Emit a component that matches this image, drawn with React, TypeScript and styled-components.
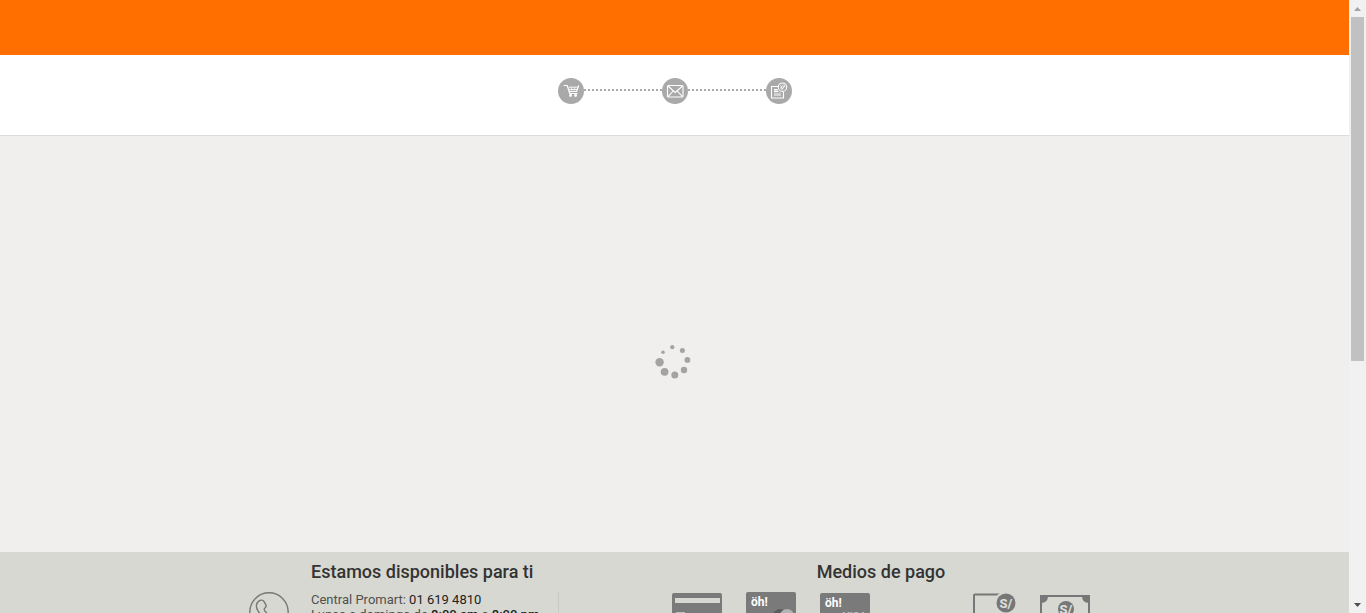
import React from "react";
import styled, { createGlobalStyle } from "styled-components";

const GlobalStyle = createGlobalStyle`
  *, *::before, *::after { box-sizing: border-box; }
  body {
    margin: 0;
    background: #f0efee;
    font-family: Roboto, "Liberation Sans", sans-serif;
    color: #333;
  }
  h2, p { margin: 0; }
`;

const Shell = styled.div`
  display: flex;
  height: 100vh;
  overflow: hidden;
`;

const Page = styled.div`
  flex: 1;
  min-width: 0;
  overflow: hidden;
`;

const Header = styled.header`
  height: 55px;
  background: #ff6f00;
`;

const Progress = styled.nav`
  display: flex;
  justify-content: center;
  padding: 23px 0 31px;
  background: #fff;
  border-bottom: 1px solid #dcdcda;
`;

const Steps = styled.ol`
  display: flex;
  margin: 0;
  padding: 0;
  list-style: none;
`;

const Step = styled.li`
  display: flex;

  & + &::before {
    content: "";
    width: 78px;
    height: 2px;
    margin-top: 11px;
    background: repeating-linear-gradient(90deg, #a9a9a9 0 2px, #fff 2px 4px);
  }
`;

const StepCircle = styled.span`
  display: grid;
  place-items: center;
  width: 26px;
  height: 26px;
  border-radius: 50%;
  background: #a9a9a9;

  svg { display: block; }
`;

const Loading = styled.main`
  display: grid;
  place-items: center;
  height: 416px;
  padding: 34px 4px 0 0;
`;

const Footer = styled.footer`
  min-height: 220px;
  background: #d7d8d1;
`;

const FooterInner = styled.div`
  display: flex;
  justify-content: space-between;
  align-items: flex-start;
  max-width: 851px;
  margin: 0 auto;
  padding: 8px 10px 0 0;
`;

const Contact = styled.section`
  width: 310px;
`;

const Payments = styled.section`
  width: 418px;
`;

const Title = styled.h2<{ $center?: boolean }>`
  padding-left: ${(p) => (p.$center ? "0" : "62px")};
  text-align: ${(p) => (p.$center ? "center" : "left")};
  font-size: 18px;
  line-height: 24px;
  font-weight: 500;
  color: #333;
`;

const ContactBody = styled.div`
  display: flex;
  gap: 22px;
  min-height: 120px;
  margin-top: 8px;
  border-right: 1px solid #c8c9c4;
`;

const ContactText = styled.p`
  font-size: 13px;
  line-height: 15px;
  color: #505050;
`;

const Strong = styled.span<{ $bold?: boolean }>`
  color: #222;
  font-weight: ${(p) => (p.$bold ? 500 : 400)};
`;

const Methods = styled.div`
  display: flex;
  justify-content: space-between;
  margin-top: 8px;
`;

const MethodGroup = styled.div`
  display: flex;
  gap: 24px;

  svg { display: block; }
`;

const Rail = styled.div`
  display: flex;
  flex-direction: column;
  width: 17px;
  background: #f1f1f1;
`;

const RailButton = styled.button`
  display: grid;
  place-items: center;
  width: 17px;
  height: 17px;
  padding: 0;
  border: 0;
  background: transparent;
`;

const Track = styled.div`
  flex: 1;
  padding: 0 2px;
`;

const Thumb = styled.div`
  height: 59.4%;
  background: #c1c1c1;
`;

const CartIcon = () => (
  <svg width="26" height="26" viewBox="0 0 26 26" fill="none" stroke="#fff" strokeWidth="1.2" aria-hidden="true">
    <path d="M5.500 7.500h3.700l2.500 8h7.800" />
    <path d="M11 13.500h7.600L20.700 7.500" />
    <path d="M10.500 9.200h9.300M11 11.400h8.200" strokeWidth="0.9" />
    <path d="M13.200 8.800l.8 4.500M16.600 8.800l-.2 4.500" strokeWidth="0.600" />
    <circle cx="12.600" cy="17.500" r="1.400" fill="#fff" stroke="none" />
    <circle cx="17.600" cy="17.500" r="1.400" fill="#fff" stroke="none" />
  </svg>
);

const MailIcon = () => (
  <svg width="26" height="26" viewBox="0 0 26 26" fill="none" stroke="#fff" strokeWidth="1.1" aria-hidden="true">
    <rect x="5.5" y="7.5" width="15.5" height="11.5" rx="1" />
    <path d="M6 8l7.2 6.5L20.5 8M6 18.7l5.2-5.7M20.5 18.7L15.2 13" />
  </svg>
);

const OrderIcon = () => (
  <svg width="26" height="26" viewBox="0 0 26 26" fill="none" stroke="#fff" strokeWidth="1.1" aria-hidden="true">
    <path d="M12 8.500H5.500V20h12v-6" />
    <path d="M8 11.500h3.500M8 13.500h4.500M8 17h7" />
    <path d="M8 12.500h4M8 15.200h7" strokeWidth="0.600" />
    <circle cx="16.500" cy="9.200" r="4.200" />
    <path d="M14.500 7.500l1.700 3.500 2.600-4M14.500 10.500l3-4M15.500 12l3.500-4" strokeWidth="0.800" />
  </svg>
);

const Spinner = () => (
  <svg width="38" height="38" viewBox="0 0 38 38" fill="#a3a3a3" role="img" aria-label="Cargando">
    <circle cx="18.3" cy="5.2" r="2.1" />
    <circle cx="28.4" cy="8.5" r="2.5" />
    <circle cx="33.4" cy="17.9" r="2.9" />
    <circle cx="30" cy="28" r="3.2" />
    <circle cx="20.8" cy="32.9" r="3.5" />
    <circle cx="10.6" cy="29.8" r="3.9" />
    <circle cx="5.6" cy="20.3" r="4.2" />
    <circle cx="9" cy="10.2" r="1.8" />
  </svg>
);

const PhoneIcon = () => (
  <svg width="40" height="40" viewBox="0 0 40 40" fill="none" stroke="#777" strokeWidth="1.4" aria-hidden="true">
    <circle cx="20" cy="20" r="19.2" />
    <path d="M8.500 10.500c2-2.600 5-3.200 6.400-1.200l2 3.500c.7 1.400.2 2.200-.8 3-1.300 1-1 2.200 0 3.400l5 5.500c1.100 1 2.100 1 3.100.3 1.500-1 2.500-.7 3.600.2l3 2.600c1.500 1.500 1 3-.3 4.100-3.200 2.500-7.500 1.200-11.500-2.200C11.500 23 4.500 16 8.500 10.500z" />
  </svg>
);

const CardIcon = () => (
  <svg width="50" height="34" viewBox="0 0 50 34" aria-label="Tarjeta" role="img">
    <rect y="1" width="50" height="32" rx="2" fill="#7a7a7a" />
    <rect x="3" y="6" width="45" height="5" fill="#d7d8d1" />
    <rect x="4" y="20" width="9" height="2" fill="#c0c0bd" />
  </svg>
);

const OhCard = ({ visa }: { visa?: boolean }) => (
  <svg width="50" height="34" viewBox="0 0 50 34" aria-label={visa ? "oh! Visa" : "oh! Mastercard"} role="img">
    <rect y={visa ? 1 : 0} width="50" height="33" rx="2" fill="#7a7a7a" />
    <text x="5" y={visa ? 15 : 14} fill="#fff" fontFamily="Roboto, sans-serif" fontSize="12" fontWeight="700">
      öh!
    </text>
    {visa ? (
      <text x="22" y="28" fill="#c4c4c4" fontFamily="Roboto, sans-serif" fontSize="11" fontWeight="700" fontStyle="italic">
        VISA
      </text>
    ) : (
      <>
        <circle cx="34" cy="24" r="7" fill="#5c5c5c" />
        <circle cx="41" cy="24" r="7" fill="#b4b4b4" />
      </>
    )}
  </svg>
);

const SolSign = ({ cx, cy, r }: { cx: number; cy: number; r: number }) => (
  <>
    <circle cx={cx} cy={cy} r={r + 2} fill="#d7d8d1" />
    <circle cx={cx} cy={cy} r={r} fill="#777" />
    <text x={cx} y={cy + 5} textAnchor="middle" fill="#e0e1dc" fontFamily="Roboto, sans-serif" fontSize="13" fontWeight="700">
      S/
    </text>
  </>
);

const OnlineCashIcon = () => (
  <svg width="43" height="34" viewBox="0 0 43 34" aria-label="Pago en línea" role="img">
    <path d="M1 34V3.500q0-1 1-1h35" fill="none" stroke="#777" strokeWidth="2" />
    <SolSign cx={33} cy={11} r={9.5} />
  </svg>
);

const CashIcon = () => (
  <svg width="50" height="34" viewBox="0 0 50 34" aria-label="Efectivo" role="img">
    <path d="M1 4h48v29H1z" fill="none" stroke="#777" strokeWidth="2" />
    <path d="M1 4h7q0 7-7 7zM49 4h-7q0 7 7 7z" fill="#777" />
    <SolSign cx={26} cy={17} r={8} />
  </svg>
);

const steps = [
  { label: "Carrito", Icon: CartIcon },
  { label: "Correo", Icon: MailIcon },
  { label: "Pedido", Icon: OrderIcon },
];

export default function App() {
  return (
    <>
      <GlobalStyle />
      <Shell>
        <Page>
          <Header />
          <Progress aria-label="Progreso de compra">
            <Steps>
              {steps.map(({ label, Icon }) => (
                <Step key={label}>
                  <StepCircle role="img" aria-label={label}>
                    <Icon />
                  </StepCircle>
                </Step>
              ))}
            </Steps>
          </Progress>
          <Loading>
            <Spinner />
          </Loading>
          <Footer>
            <FooterInner>
              <Contact>
                <Title>Estamos disponibles para ti</Title>
                <ContactBody>
                  <PhoneIcon />
                  <ContactText>
                    Central Promart: <Strong>01 619 4810</Strong>
                    <br />
                    Lunes a domingo de <Strong $bold>8:00 am</Strong> a <Strong $bold>8:00 pm</Strong>
                  </ContactText>
                </ContactBody>
              </Contact>
              <Payments>
                <Title $center>Medios de pago</Title>
                <Methods>
                  <MethodGroup>
                    <CardIcon />
                    <OhCard />
                    <OhCard visa />
                  </MethodGroup>
                  <MethodGroup>
                    <OnlineCashIcon />
                    <CashIcon />
                  </MethodGroup>
                </Methods>
              </Payments>
            </FooterInner>
          </Footer>
        </Page>
        <Rail>
          <RailButton aria-label="Subir">
            <svg width="7" height="4" viewBox="0 0 7 4" fill="#a3a3a3" aria-hidden="true">
              <path d="M3.500 0L7 4H0z" />
            </svg>
          </RailButton>
          <Track>
            <Thumb />
          </Track>
          <RailButton aria-label="Bajar">
            <svg width="7" height="4" viewBox="0 0 7 4" fill="#505050" aria-hidden="true">
              <path d="M0 0h7L3.500 4z" />
            </svg>
          </RailButton>
        </Rail>
      </Shell>
    </>
  );
}
